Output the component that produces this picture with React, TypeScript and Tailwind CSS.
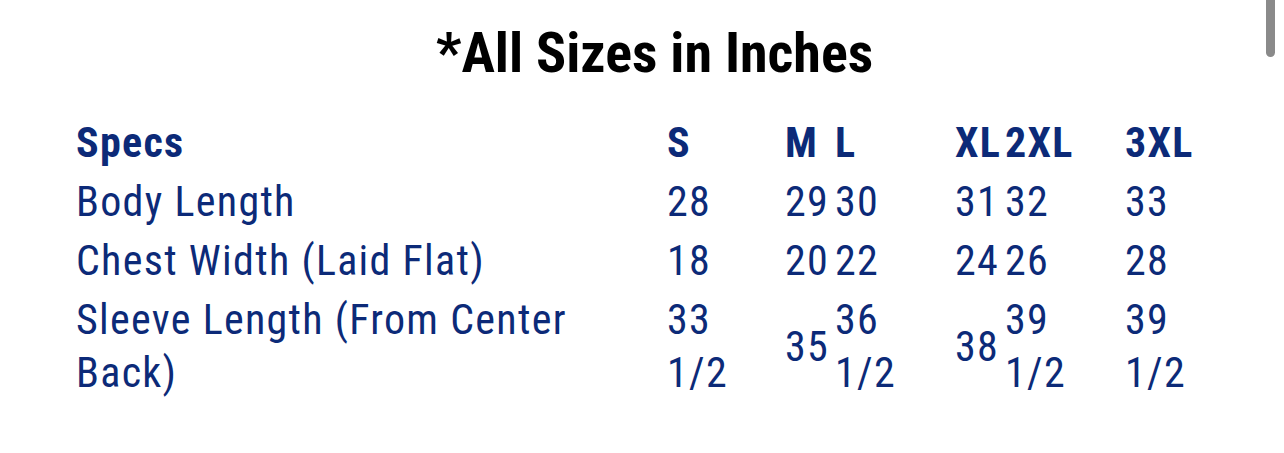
import React from "react";

const navy = "text-[#0c2a78]";

type Row = { label: React.ReactNode; vals: React.ReactNode[]; bold?: boolean };

const rows: Row[] = [
  { label: "Specs", vals: ["S", "M", "L", "XL", "2XL", "3XL"], bold: true },
  { label: "Body Length", vals: ["28", "29", "30", "31", "32", "33"] },
  { label: "Chest Width (Laid Flat)", vals: ["18", "20", "22", "24", "26", "28"] },
  {
    label: (
      <>
        Sleeve Length (From Center
        <br />
        Back)
      </>
    ),
    vals: [
      <>33<br />1/2</>,
      "35",
      <>36<br />1/2</>,
      "38",
      <>39<br />1/2</>,
      <>39<br />1/2</>,
    ],
  },
];

export default function App() {
  return (
    <div
      className="relative w-[1284px] h-[453px] bg-white overflow-hidden"
      style={{ fontFamily: "Roboto, 'Liberation Sans', sans-serif" }}
    >
      <div className="absolute right-[9px] top-0 w-[9px] h-[57px] rounded-b-full bg-[#8a8a8a]" />
      <h1 className="pt-[21px] pl-[436px] text-[56px] leading-[64px] font-bold text-black font-stretch-condensed whitespace-nowrap">
        *All Sizes in Inches
      </h1>
      <div className="mt-[28px] pl-[76px] grid grid-cols-[591px_118px_50px_120px_50px_120px_auto] items-center text-[42px] leading-[53px] font-stretch-condensed tracking-[1.3px]">
        {rows.map((r, i) => (
          <React.Fragment key={i}>
            <div className={`py-[3px] whitespace-nowrap ${navy} ${r.bold ? "font-bold" : "font-normal"}`}>
              {r.label}
            </div>
            {r.vals.map((v, j) => (
              <div
                key={j}
                className={`py-[3px] whitespace-nowrap ${navy} ${r.bold ? "font-bold" : "font-normal"}`}
              >
                {v}
              </div>
            ))}
          </React.Fragment>
        ))}
      </div>
    </div>
  );
}
